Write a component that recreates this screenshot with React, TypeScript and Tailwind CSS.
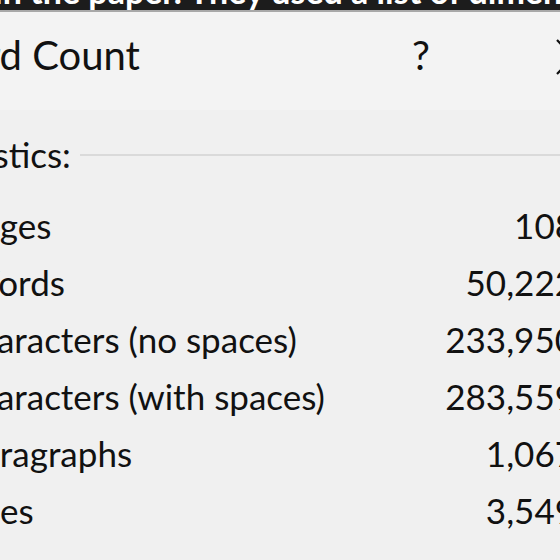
import React from "react";

// Word Count dialog, zoomed crop
const stats = [
  { label: "Pages", value: "108", cut: "ml-[-38px]" },
  { label: "Words", value: "50,222", cut: "ml-[-36px]" },
  { label: "Characters (no spaces)", value: "233,950", cut: "ml-[-46px]" },
  { label: "Characters (with spaces)", value: "283,559", cut: "ml-[-46px]" },
  { label: "Paragraphs", value: "1,067", cut: "ml-[-38px]" },
  { label: "Lines", value: "3,549", cut: "ml-[-46px]" },
];

const App = () => {
  return (
    <div
      className="w-[560px] h-[560px] overflow-hidden bg-[#f0f0f0] text-[#111111]"
      style={{ fontFamily: 'Lato, "Noto Sans", sans-serif' }}
    >
      {/* document text behind the dialog */}
      <div className="h-[10px] overflow-hidden bg-[#1c1c1c]">
        <div className="mt-[-26px] ml-[-6px] whitespace-nowrap text-[34px] leading-[34px] font-bold text-white">
          in the paper. They used a list of dimen
        </div>
      </div>
      <div className="h-[2px] bg-[#a8a8a8]" />

      {/* title bar */}
      <div className="w-[600px] bg-[#f3f3f3]">
        <div className="flex items-center pt-[15px] pb-[26px] text-[40px] leading-[57px]">
          <span className="ml-[-76px] whitespace-nowrap">Word Count</span>
          <span className="ml-auto">?</span>
          <div className="ml-[125px] flex w-[45px] items-center">
            <svg width="36" height="36" viewBox="0 0 36 36" className="mt-[2px]">
              <path d="M2 1 L35 35 M35 1 L2 35" stroke="#111" strokeWidth="2.2" />
            </svg>
          </div>
        </div>
      </div>

      <div className="w-[575px] pt-[16px] text-[35px] leading-[57px]">
        <div className="flex items-center">
          <span className="ml-[-76px] whitespace-nowrap">Statistics:</span>
          <div className="ml-[9px] h-[2px] flex-1 bg-[#dadada]" />
        </div>
        <div className="mt-[14px] flex flex-col">
          {stats.map((s) => (
            <div key={s.label} className="flex items-center whitespace-nowrap">
              <span className={s.cut}>{s.label}</span>
              <span className="ml-auto">{s.value}</span>
            </div>
          ))}
        </div>
      </div>
    </div>
  );
};

export default App;
